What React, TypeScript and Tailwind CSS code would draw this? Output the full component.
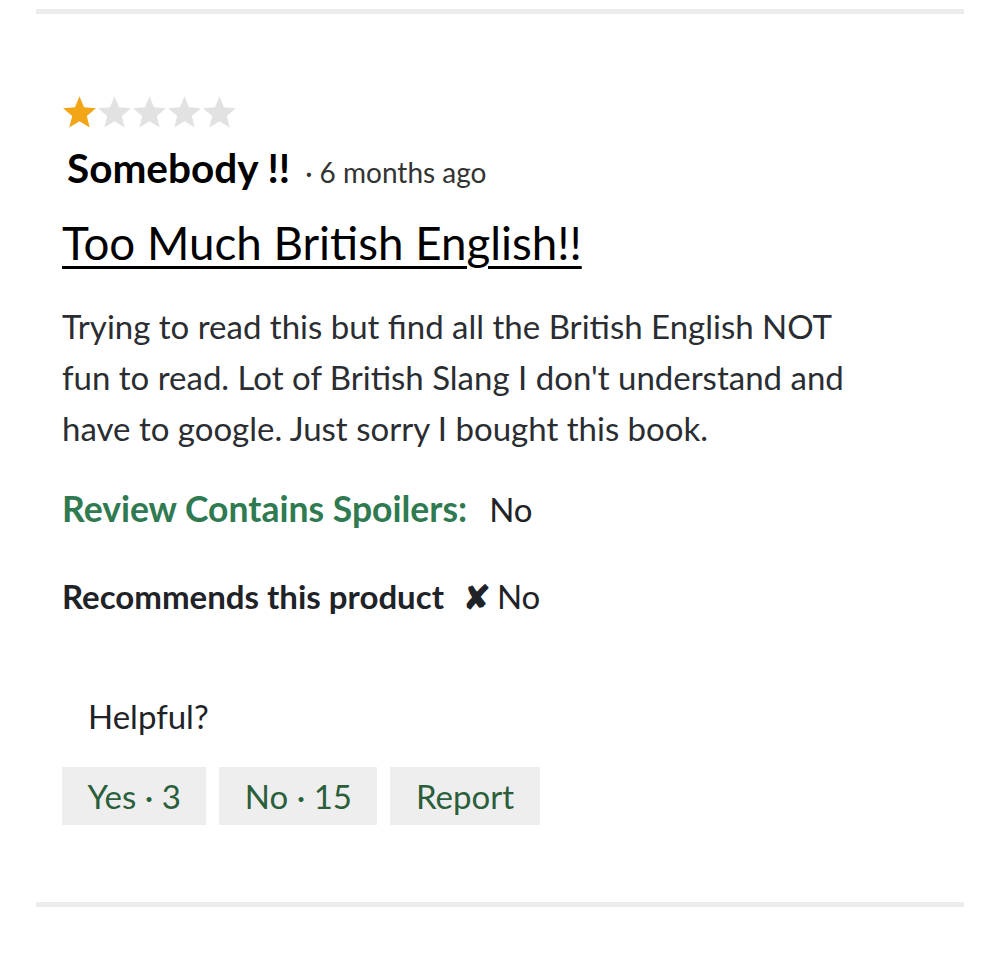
import React from "react";

const Star = ({ filled }: { filled: boolean }) => (
  <svg width="35" height="35" viewBox="0 0 24 24" className="block">
    <path
      d="M12 1.5l3.1 7.6 8.2.6-6.3 5.3 2 8-7-4.4-7 4.4 2-8L.7 9.7l8.2-.6z"
      fill={filled ? "#f2a516" : "#e2e2e2"}
    />
  </svg>
);

export default function App() {
  return (
    <div
      className="w-[1000px] h-[958px] bg-white pt-[9px] px-[36px]"
      style={{ fontFamily: "Lato, 'Noto Sans', sans-serif" }}
    >
      <div className="border-t-[5px] border-[#ececec] pl-[26px] pt-[80px] text-[#1f2328]">
        <div className="flex">
          {[0, 1, 2, 3, 4].map((i) => (
            <Star key={i} filled={i === 0} />
          ))}
        </div>
        <div className="flex items-baseline mt-[15px] pl-[5px] h-[48px] leading-[48px]">
          <span className="text-[40.5px] font-bold text-black">Somebody !!</span>
          <span className="text-[28px] text-[#333] ml-[15px]">· 6 months ago</span>
        </div>
        <h2 className="text-[45.7px] text-black underline underline-offset-[6px] decoration-[3px] leading-[56px] mt-[23px]">
          Too Much British English!!
        </h2>
        <p className="text-[33px] leading-[51px] text-[#2a2d31] mt-[30px] w-[820px]">
          Trying to read this but find all the British English NOT fun to read. Lot of British Slang I don't understand and have to google. Just sorry I bought this book.
        </p>
        <div className="mt-[33px] flex items-baseline leading-[44px]">
          <span className="text-[35.5px] font-bold text-[#2f7a50]">Review Contains Spoilers:</span>
          <span className="ml-[22px] text-[33px] text-[#1f2328]">No</span>
        </div>
        <div className="mt-[45px] flex items-baseline text-[33px] leading-[40px]">
          <span className="font-bold text-[#1f2328]">Recommends this product</span>
          <span className="ml-[19px] font-bold">✘</span>
          <span className="ml-[6px]">No</span>
        </div>
        <div className="mt-[80px] pl-[26px] text-[33px] leading-[40px] text-[#1f2328]">Helpful?</div>
        <div className="mt-[31px] flex gap-[13px]">
          {["Yes · 3", "No · 15", "Report"].map((t) => (
            <button
              key={t}
              className="h-[58px] px-[25.5px] bg-[#eeeeee] text-[#2b5e3a] text-[33px] leading-none"
            >
              {t}
            </button>
          ))}
        </div>
        <div className="mt-[77px] border-b-[5px] border-[#ececec] -ml-[26px]" />
      </div>
    </div>
  );
}
